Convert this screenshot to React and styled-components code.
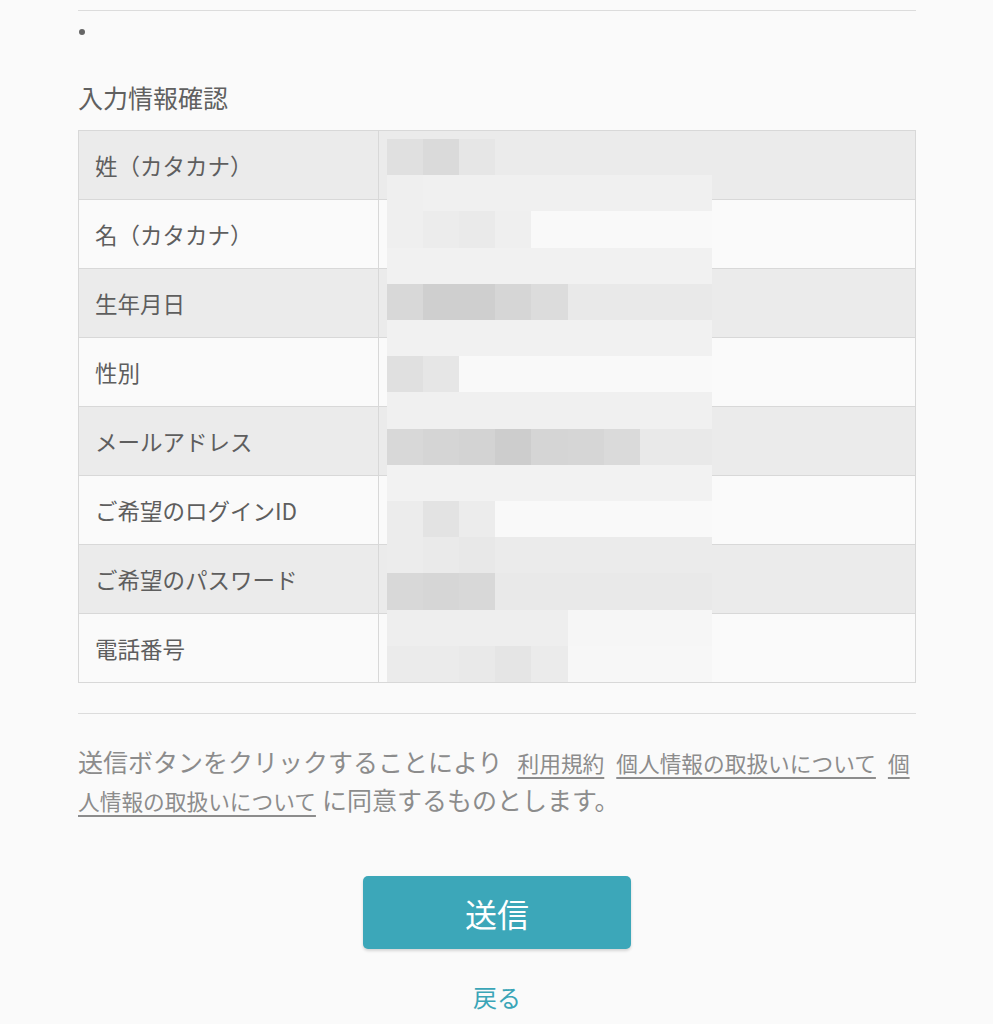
import React from "react";
import styled, { createGlobalStyle } from "styled-components";

const GlobalStyle = createGlobalStyle`
  body {
    margin: 0;
    background: #fafafa;
    font-family: "Noto Sans CJK JP", "Noto Sans", sans-serif;
  }
`;

const rows = [
  "姓（カタカナ）",
  "名（カタカナ）",
  "生年月日",
  "性別",
  "メールアドレス",
  "ご希望のログインID",
  "ご希望のパスワード",
  "電話番号",
];

// pixelated values that hide the personal data
const mosaic = [
  [0xe0, 0xda, 0xe6, 0xeb, 0xeb, 0xeb, 0xeb, 0xeb, 0xeb],
  [0xef, 0xf0, 0xf0, 0xf0, 0xf0, 0xf0, 0xf0, 0xf0, 0xf0],
  [0xef, 0xec, 0xea, 0xef, 0xf9, 0xf9, 0xf9, 0xf9, 0xf9],
  [0xf1, 0xf1, 0xf1, 0xf1, 0xf1, 0xf1, 0xf1, 0xf1, 0xf1],
  [0xd8, 0xcf, 0xcf, 0xd6, 0xdc, 0xe9, 0xe9, 0xe9, 0xe9],
  [0xf1, 0xf1, 0xf1, 0xf1, 0xf1, 0xf1, 0xf1, 0xf1, 0xf1],
  [0xe0, 0xe6, 0xf9, 0xf9, 0xf9, 0xf9, 0xf9, 0xf9, 0xf9],
  [0xf0, 0xf0, 0xf0, 0xf0, 0xf0, 0xf0, 0xf0, 0xf0, 0xf0],
  [0xd8, 0xd5, 0xd3, 0xcd, 0xd5, 0xd6, 0xda, 0xe9, 0xe9],
  [0xf2, 0xf2, 0xf2, 0xf2, 0xf2, 0xf2, 0xf2, 0xf2, 0xf2],
  [0xec, 0xe3, 0xec, 0xf9, 0xf9, 0xf9, 0xf9, 0xf9, 0xf9],
  [0xec, 0xea, 0xe8, 0xeb, 0xeb, 0xeb, 0xeb, 0xeb, 0xeb],
  [0xd8, 0xd6, 0xd8, 0xe9, 0xe9, 0xe9, 0xe9, 0xe9, 0xe9],
  [0xee, 0xee, 0xee, 0xee, 0xee, 0xf6, 0xf6, 0xf6, 0xf6],
  [0xeb, 0xeb, 0xe9, 0xe5, 0xeb, 0xf7, 0xf7, 0xf7, 0xf7],
];

const Mosaic = () => (
  <MosaicSvg viewBox="0 0 9 15" preserveAspectRatio="none" shapeRendering="crispEdges">
    {mosaic.map((line, y) =>
      line.map((v, x) => (
        <rect key={`${x}-${y}`} x={x} y={y} width="1.02" height="1.02" fill={`rgb(${v},${v},${v})`} />
      ))
    )}
  </MosaicSvg>
);

const App = () => {
  return (
    <>
      <GlobalStyle />
      <Page>
        <Rule />
        <BulletRow>
          <Dot />
        </BulletRow>
        <Heading>入力情報確認</Heading>
        <Table>
          {rows.map((label, i) => (
            <Row key={label} shaded={i % 2 === 0} last={i === rows.length - 1}>
              <Label>{label}</Label>
              <Value />
            </Row>
          ))}
          <Mosaic />
        </Table>
        <Divider />
        <Notice>
          送信ボタンをクリックすることにより
          <Link href="#" first>利用規約</Link>
          <Link href="#">個人情報の取扱いについて</Link>
          <Link href="#">個人情報の取扱いについて</Link>
          に同意するものとします。
        </Notice>
        <Actions>
          <SubmitButton type="submit">送信</SubmitButton>
          <Back href="#">戻る</Back>
        </Actions>
      </Page>
    </>
  );
};

export default App;

const Page = styled.div`
  width: 838px;
  margin: 0 0 0 78px;
  padding-top: 10px;
`;

const Rule = styled.div`
  height: 1px;
  background: #dcdcdc;
`;

const BulletRow = styled.div`
  height: 44px;
  padding-top: 18px;
  padding-left: 1px;
  box-sizing: border-box;
`;

const Dot = styled.span`
  display: block;
  width: 6px;
  height: 6px;
  border-radius: 50%;
  background: #666;
`;

const Heading = styled.h2`
  margin: 24px 0 15px;
  font-size: 25px;
  line-height: 36px;
  font-weight: 400;
  color: #606060;
`;

const Table = styled.div`
  position: relative;
  border: 1px solid #d8d8d8;
`;

const Row = styled.div`
  display: grid;
  grid-template-columns: 300px 1fr;
  height: 68px;
  background: ${(p) => (p.shaded ? "#ebebeb" : "#fafafa")};
  border-bottom: ${(p) => (p.last ? "none" : "1px solid #d8d8d8")};
`;

const Label = styled.div`
  display: flex;
  align-items: center;
  padding-left: 16px;
  border-right: 1px solid #d8d8d8;
  font-size: 22.5px;
  color: #5e5e5e;
`;

const Value = styled.div``;

const MosaicSvg = styled.svg`
  position: absolute;
  left: 308px;
  top: 8px;
  width: 325px;
  height: 543px;
`;

const Divider = styled.div`
  height: 1px;
  background: #dcdcdc;
  margin-top: 30px;
`;

const Notice = styled.p`
  margin: 28px 0 0;
  font-size: 25px;
  line-height: 38px;
  color: #8c8c8c;
`;

const Link = styled.a`
  font-size: 21.7px;
  line-height: 1;
  color: #8c8c8c;
  text-decoration: underline;
  text-underline-offset: 5px;
  margin: ${(p) => (p.first ? "0 6px 0 15px" : "0 6px")};
`;

const Actions = styled.div`
  display: flex;
  flex-direction: column;
  align-items: center;
  margin-top: 58px;
`;

const SubmitButton = styled.button`
  width: 268px;
  height: 73px;
  border: none;
  border-radius: 5px;
  background: #3ca7b9;
  box-shadow: 0 2px 3px rgba(0, 0, 0, 0.15);
  color: #fff;
  font-family: inherit;
  font-size: 32px;
  cursor: pointer;
`;

const Back = styled.a`
  margin-top: 33px;
  font-size: 24px;
  line-height: 30px;
  color: #3aa5b7;
  text-decoration: none;
`;
